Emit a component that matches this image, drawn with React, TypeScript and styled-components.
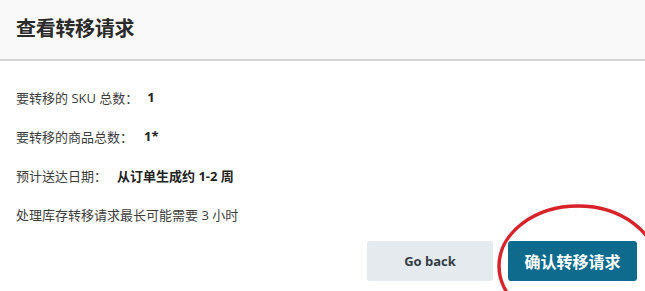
import React from "react";
import styled, { createGlobalStyle } from "styled-components";

const Global = createGlobalStyle`
  html, body { margin: 0; padding: 0; background: #ffffff; }
  body { font-family: "Open Sans", "Noto Sans CJK SC", sans-serif; width: 645px; height: 291px; overflow: hidden; }
`;

const Page = styled.div`
  position: relative;
  width: 645px;
  height: 291px;
  overflow: hidden;
  background: #ffffff;
`;

const Header = styled.header`
  height: 59px;
  background: #f9f9f9;
  border-bottom: 2px solid #d4d4d4;
  display: flex;
  align-items: center;
  padding: 0 16px;
`;

const Title = styled.h1`
  margin: 0;
  font-family: "Noto Sans CJK SC", sans-serif;
  font-size: 20px;
  font-weight: 700;
  color: #2a2a2a;
  letter-spacing: -0.3px;
  line-height: 1;
  margin-top: -4px;
`;

const Body = styled.div`
  padding: 26px 16px 0 16px;
  display: flex;
  flex-direction: column;
  gap: 19px;
`;

const Row = styled.div`
  display: flex;
  align-items: center;
  height: 20px;
  font-size: 13px;
  color: #3d3d3d;
  font-family: "Open Sans", "Noto Sans CJK SC", sans-serif;
`;

const Label = styled.span`
  font-family: "Open Sans", "Noto Sans CJK SC", sans-serif;
`;

const Value = styled.span<{ $gap: number }>`
  margin-left: ${(p) => p.$gap}px;
  font-weight: 700;
  color: #222;
  font-family: "Open Sans", "Noto Sans CJK SC", sans-serif;
`;

const Actions = styled.div`
  display: flex;
  justify-content: flex-end;
  gap: 15px;
  padding: 17px 8px 0 0;
`;

const Button = styled.button<{ $primary?: boolean }>`
  height: 40px;
  border: none;
  border-radius: 3px;
  cursor: pointer;
  font-weight: 700;
  font-family: "Open Sans", "Noto Sans CJK SC", sans-serif;
  background: ${(p) => (p.$primary ? "#0f6b8e" : "#e4eaed")};
  color: ${(p) => (p.$primary ? "#ffffff" : "#333d44")};
  font-size: ${(p) => (p.$primary ? "16px" : "13px")};
  width: ${(p) => (p.$primary ? "129px" : "126px")};
  padding: 0;
`;

const Annotation = styled.svg`
  position: absolute;
  left: 0;
  top: 0;
  pointer-events: none;
`;

export default function App() {
  return (
    <>
      <Global />
      <Page>
        <Header>
          <Title>查看转移请求</Title>
        </Header>
        <Body>
          <Row>
            <Label>要转移的 SKU 总数：</Label>
            <Value $gap={9}>1</Value>
          </Row>
          <Row>
            <Label>要转移的商品总数：</Label>
            <Value $gap={11}>1*</Value>
          </Row>
          <Row>
            <Label>预计送达日期：</Label>
            <Value $gap={10}>从订单生成约 1-2 周</Value>
          </Row>
          <Row>
            <Label>处理库存转移请求最长可能需要 3 小时</Label>
          </Row>
        </Body>
        <Actions>
          <Button>Go back</Button>
          <Button $primary>确认转移请求</Button>
        </Actions>
        <Annotation width="645" height="291" viewBox="0 0 645 291">
          <ellipse cx="578" cy="266" rx="79" ry="60" fill="none" stroke="#d9232a" strokeWidth="3.5" />
        </Annotation>
      </Page>
    </>
  );
}
